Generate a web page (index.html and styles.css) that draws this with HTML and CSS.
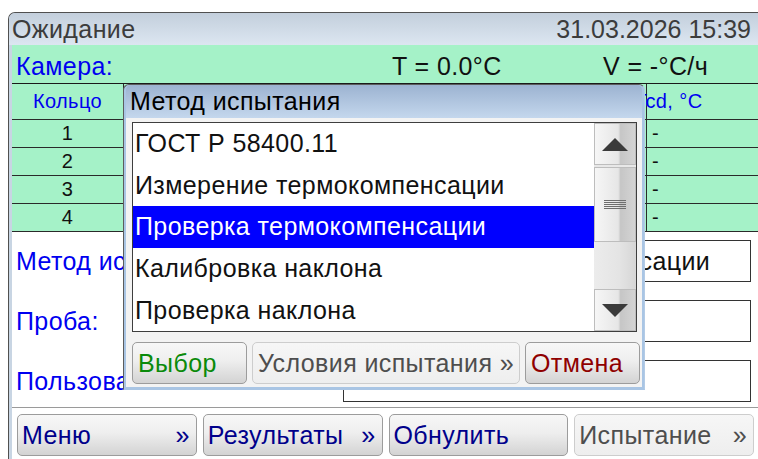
FILE: index.html
```html
<!DOCTYPE html>
<html lang="ru">
<head>
<meta charset="utf-8">
<title>Ожидание</title>
<link rel="stylesheet" href="styles.css">
</head>
<body>
<div class="window">
  <header class="titlebar">
    <span class="state">Ожидание</span>
    <span class="clock">31.03.2026 15:39</span>
  </header>
  <div class="client">
    <div class="chamber">
      <span class="chamber-label">Камера:</span>
      <span>T = 0.0°C</span>
      <span>V = -°C/ч</span>
    </div>
    <div class="rings">
      <div class="cell head ring">Кольцо</div>
      <div class="cell head mid"></div>
      <div class="cell head temp">Tcd, °C</div>
      <div class="cell ring">1</div><div class="cell mid"></div><div class="cell temp">-</div>
      <div class="cell ring">2</div><div class="cell mid"></div><div class="cell temp">-</div>
      <div class="cell ring">3</div><div class="cell mid"></div><div class="cell temp">-</div>
      <div class="cell ring">4</div><div class="cell mid"></div><div class="cell temp">-</div>
    </div>
    <div class="form">
      <span class="form-label">Метод испытания:</span>
      <div class="field">Проверка термокомпенсации</div>
      <span class="form-label">Проба:</span>
      <div class="field"></div>
      <span class="form-label">Пользователь:</span>
      <div class="field"></div>
    </div>
    <nav class="toolbar">
      <button class="btn nav"><span>Меню</span><span>»</span></button>
      <button class="btn nav"><span>Результаты</span><span>»</span></button>
      <button class="btn nav"><span>Обнулить</span></button>
      <button class="btn nav off"><span>Испытание</span><span>»</span></button>
    </nav>
  </div>
</div>

<div class="dialog">
  <div class="dialog-title">Метод испытания</div>
  <div class="dialog-body">
    <div class="listbox">
      <ul class="items">
        <li>ГОСТ Р 58400.11</li>
        <li>Измерение термокомпенсации</li>
        <li class="selected">Проверка термокомпенсации</li>
        <li>Калибровка наклона</li>
        <li>Проверка наклона</li>
      </ul>
      <div class="scrollbar">
        <div class="sb-btn">
          <svg width="26" height="13" viewBox="0 0 26 13"><polygon points="0,13 13,0 26,13" fill="#3a3a3a"/></svg>
        </div>
        <div class="sb-thumb">
          <svg width="22" height="9" viewBox="0 0 22 9">
            <g stroke="#6e6e6e" stroke-width="1">
              <line x1="0" y1="0.5" x2="22" y2="0.5"/>
              <line x1="0" y1="2.5" x2="22" y2="2.5"/>
              <line x1="0" y1="4.5" x2="22" y2="4.5"/>
              <line x1="0" y1="6.5" x2="22" y2="6.5"/>
              <line x1="0" y1="8.5" x2="22" y2="8.5"/>
            </g>
          </svg>
        </div>
        <div class="sb-track"></div>
        <div class="sb-btn">
          <svg width="26" height="13" viewBox="0 0 26 13"><polygon points="0,0 26,0 13,13" fill="#3a3a3a"/></svg>
        </div>
      </div>
    </div>
    <div class="dialog-buttons">
      <button class="btn ok">Выбор</button>
      <button class="btn off">Условия испытания »</button>
      <button class="btn cancel">Отмена</button>
    </div>
  </div>
</div>
</body>
</html>
```

FILE: styles.css
```css
html, body {
  margin: 0;
  padding: 0;
}

body {
  width: 758px;
  height: 459px;
  overflow: hidden;
  position: relative;
  background: #ffffff;
  font-family: "Liberation Sans", Arial, sans-serif;
  font-size: 25px;
  letter-spacing: 0.4px;
}

/* main application window */
.window {
  margin: 12px 0 0 8px;
  height: 460px;
  border-top: 1px solid #505050;
  border-left: 1px solid #505050;
  border-top-left-radius: 7px;
  background: #c8d5e3;
  overflow: hidden;
}

.titlebar {
  height: 32px;
  display: flex;
  justify-content: space-between;
  align-items: center;
  padding: 0 7px 0 3px;
  line-height: 32px;
  color: #3c3c3c;
  background: linear-gradient(#c3cfdc, #dce6f1);
}

.clock {
  letter-spacing: 0;
}

.client {
  border-left: 3px solid #c8d5e3;
  background: #ffffff;
  height: 427px;
}

/* chamber status strip */
.chamber {
  box-sizing: border-box;
  height: 38px;
  padding: 4px 0 0 4px;
  display: grid;
  grid-template-columns: 376px 211px 1fr;
  line-height: 34px;
  color: #111111;
  background: #a5f2c8;
}

.chamber-label {
  color: #0000f0;
}

/* ring table */
.rings {
  display: grid;
  grid-template-columns: 112px 523px 1fr;
  border-top: 1px solid #1a1a1a;
  background: #a5f2c8;
  font-size: 20px;
}

.cell {
  box-sizing: border-box;
  height: 28px;
  line-height: 27px;
  border-bottom: 1px solid #2a2a2a;
  color: #111111;
}

.cell.head {
  height: 36px;
  line-height: 35px;
  color: #0000f0;
}

.cell.ring {
  text-align: center;
  border-right: 1px solid #2a2a2a;
}

.cell.mid {
  border-right: 1px solid #2a2a2a;
}

.cell.temp {
  padding-left: 5px;
}

.cell.head.temp {
  padding-left: 0;
  text-indent: -12px;
}

/* test parameters */
.form {
  box-sizing: border-box;
  height: 175px;
  padding: 8px 7px 5px 4px;
  display: grid;
  grid-template-columns: 327px 1fr;
  grid-template-rows: repeat(3, 42px);
  row-gap: 18px;
  align-items: center;
}

.form-label {
  color: #0000f0;
  white-space: nowrap;
}

.field {
  box-sizing: border-box;
  height: 42px;
  border: 1px solid #333333;
  padding-left: 15px;
  line-height: 40px;
  color: #111111;
  white-space: nowrap;
  overflow: hidden;
}

/* bottom navigation */
.toolbar {
  border-top: 1px solid #9a9a9a;
  padding: 6px 4px 0 5px;
  display: grid;
  grid-template-columns: repeat(4, 1fr);
  column-gap: 6px;
}

.btn {
  box-sizing: border-box;
  height: 42px;
  margin: 0;
  padding: 0 5px;
  font-family: inherit;
  font-size: 25px;
  letter-spacing: inherit;
  text-align: left;
  white-space: nowrap;
  border: 1px solid #9c9c9c;
  border-radius: 5px;
  background: linear-gradient(#f7f7f7, #eeeeee 45%, #d3d3d3);
  color: #111111;
}

.btn.nav {
  display: flex;
  justify-content: space-between;
  align-items: center;
  color: #00008b;
  padding: 0 6px 0 4px;
}

.btn.off {
  border-color: #cdcdcd;
  background: linear-gradient(#f6f6f6, #eeeeee);
  color: #4e4e4e;
}

.btn.ok {
  color: #0a8a0a;
}

.btn.cancel {
  color: #8f0000;
}

/* method selection dialog */
.dialog {
  position: absolute;
  left: 123px;
  top: 84px;
  width: 522px;
  height: 306px;
  box-sizing: border-box;
  border: 1px solid #5c5c5c;
  border-bottom-color: #a9c5e4;
  border-right-color: #b3cbe6;
  border-radius: 6px 6px 0 0;
  padding: 0 2px 2px 2px;
  background: #a9c5e4;
  display: flex;
  flex-direction: column;
}

.dialog-title {
  height: 33px;
  line-height: 33px;
  padding-left: 4px;
  color: #000000;
  border-radius: 5px 5px 0 0;
  background: linear-gradient(#9cb3d1, #c4d7ed);
}

.dialog-body {
  flex: 1;
  background: #f3f3f3;
  padding: 4px 5px 0 6px;
}

.listbox {
  height: 210px;
  box-sizing: border-box;
  border: 1px solid #3e3e3e;
  background: #ffffff;
  display: flex;
}

.items {
  flex: 1;
  margin: 0;
  padding: 0;
  list-style: none;
  display: flex;
  flex-direction: column;
}

.items li {
  flex: 1;
  display: flex;
  align-items: center;
  padding-left: 2px;
  color: #111111;
  white-space: nowrap;
}

.items li.selected {
  background: #0000ff;
  color: #ffffff;
}

.scrollbar {
  width: 42px;
  display: flex;
  flex-direction: column;
  background: #e8e8e8;
}

.sb-btn,
.sb-thumb {
  box-sizing: border-box;
  display: flex;
  align-items: center;
  justify-content: center;
  border: 1px solid #bdbdbd;
  background: linear-gradient(to right, #f6f6f6, #e6e6e6 58%, #c6c6c6 64%, #d4d4d4);
}

.sb-btn {
  height: 42px;
}

.sb-thumb {
  height: 75px;
  margin-top: 2px;
}

.sb-track {
  flex: 1;
  background: linear-gradient(to right, #ececec, #e4e4e4 60%, #d6d6d6);
}

.dialog-buttons {
  margin-top: 10px;
  display: grid;
  grid-template-columns: 115px 1fr 115px;
  column-gap: 5px;
}
```
